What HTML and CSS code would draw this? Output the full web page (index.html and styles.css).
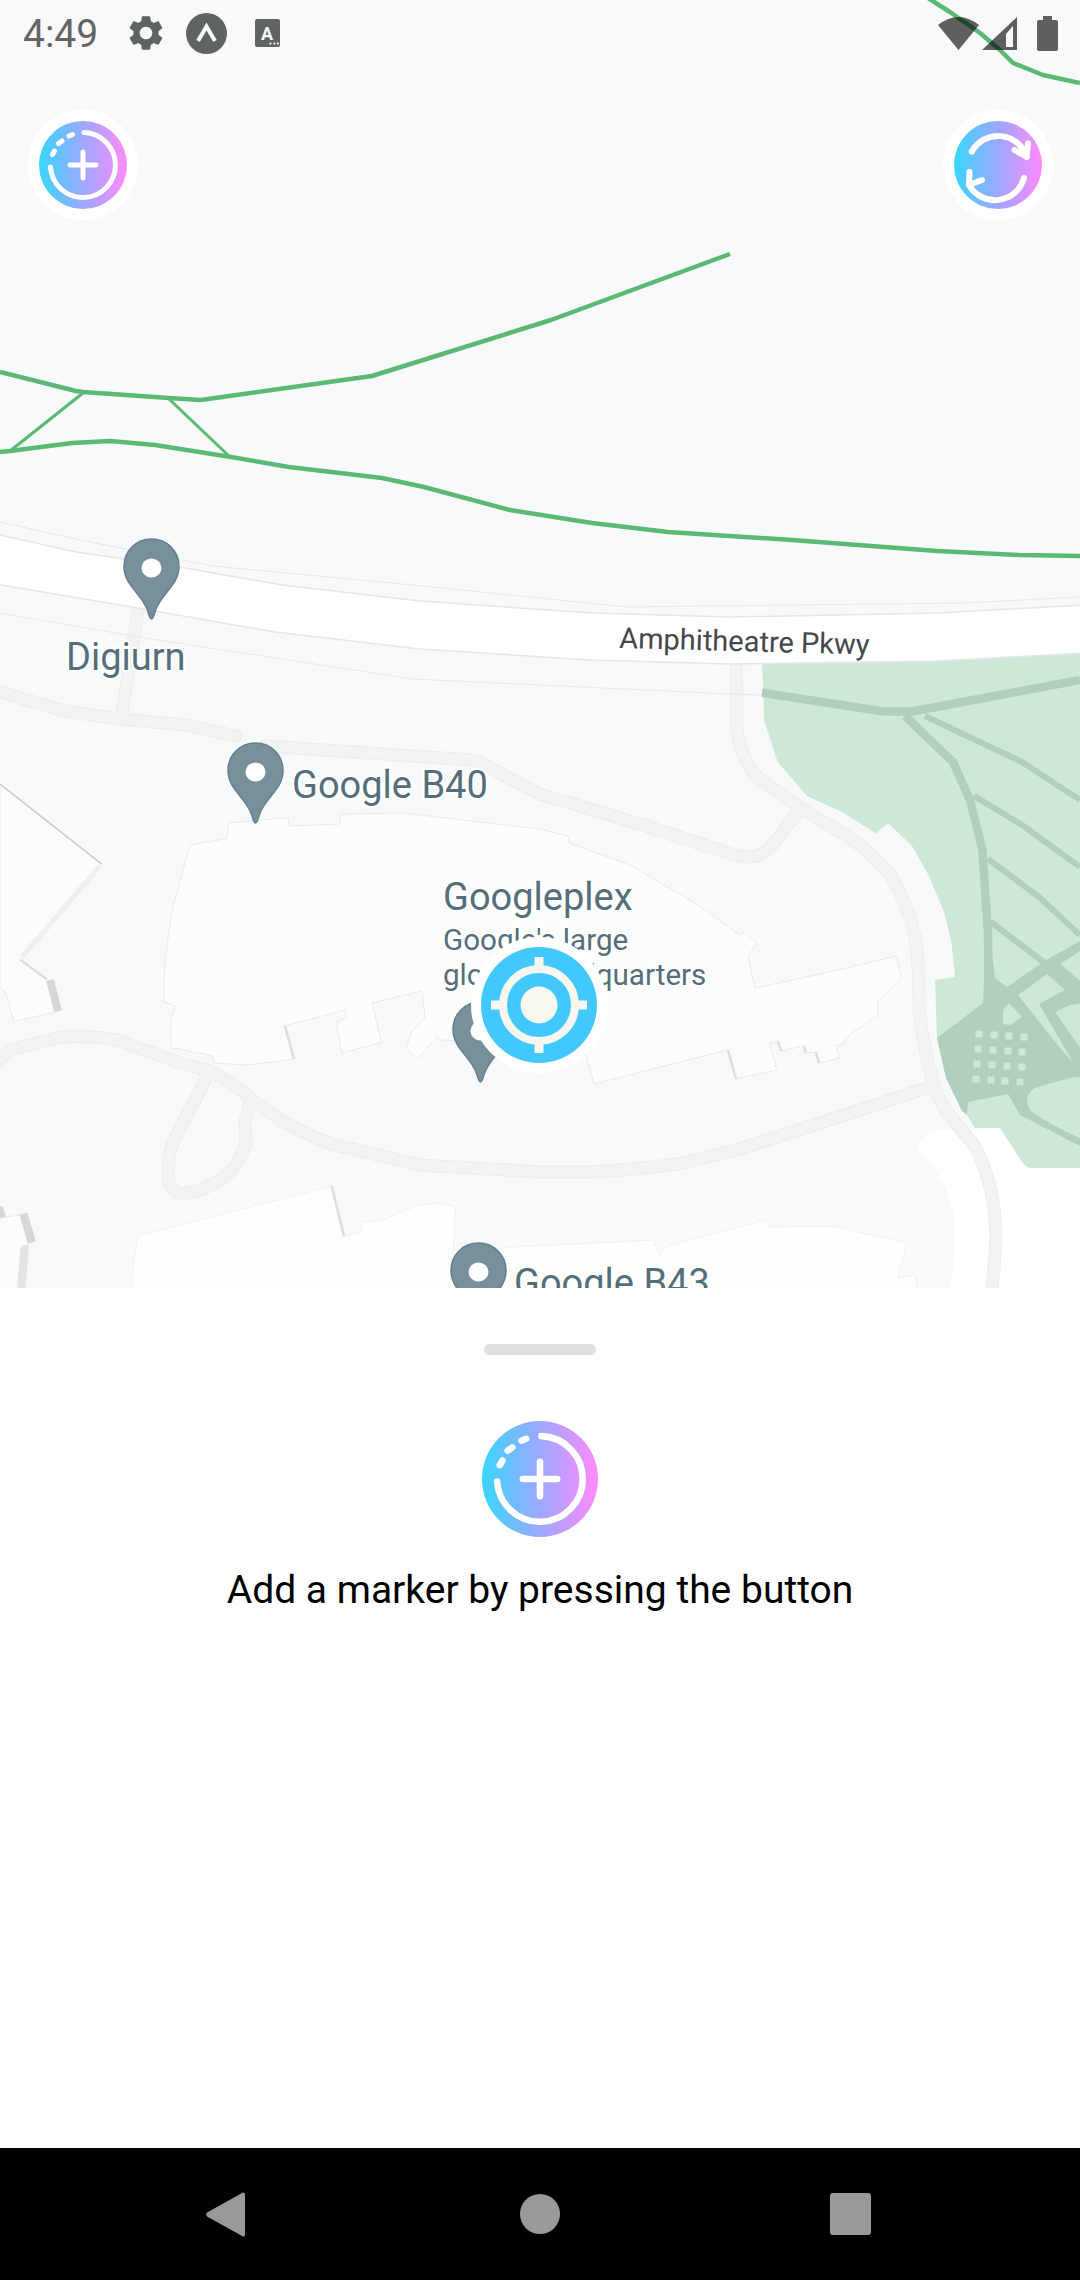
FILE: index.html
```html
<!DOCTYPE html>
<html lang="en">
<head>
<meta charset="utf-8">
<title>Add a marker</title>
<link rel="stylesheet" href="styles.css">
</head>
<body>
<div class="screen">
  <section class="map">
    <svg class="map-canvas" viewBox="0 0 1080 1288" width="1080" height="1288">
      <defs>
        <path id="pin" d="M27.5 0C12 0 0 12 0 27.5C0 46 17 54 23 70C25 75 25.500 80 27.500 80C29.500 80 30 75 32 70C38 54 55 46 55 27.500C55 12 43 0 27.500 0Z"/>
        <g id="pin-marker">
          <use href="#pin" class="pin-body"/>
          <ellipse cx="27.500" cy="29" rx="10" ry="9.500" class="pin-hole"/>
        </g>
        <path id="r-main" d="M736 650L737 728Q739 748 747 762Q752 773 760 779L798 806L850 838Q875 855 891 876Q908 905 915 935Q919 960 919 1010Q924 1050 933 1082Q938 1098 946 1111L974 1145Q985 1165 991 1191Q996 1215 996 1238Q995 1265 991 1295"/>
        <path id="r-north" d="M265 746L472 760Q482 762 492 769L540 794L643 825L719 850Q735 856 747 857Q755 857 760 855Q770 850 778 838L798 812"/>
        <path id="r-south" d="M927 1088L740 1149L678 1164Q630 1170 592 1172L540 1172L420 1165L331 1144Q305 1134 282 1121L255 1102Q245 1093 234 1085L210 1071L186 1065L117 1040Q90 1035 62 1037L10 1050L-8 1066"/>
        <path id="r-loop" d="M207 1077L176 1136Q170 1148 169 1159L168 1178Q170 1190 181 1194Q198 1192 213 1184Q228 1176 236 1165Q243 1154 246 1142L245 1121L250 1102"/>
        <path id="r-west" d="M-10 689L65 711L120 719L186 725L236 736"/>
        <path id="r-link" d="M140 600L122 712"/>
      </defs>

      <rect class="land" width="1080" height="1288"/>
      <path class="water" d="M1001 1128L946 1130Q925 1132 919 1143Q918 1150 922 1153Q945 1180 950 1200Q957 1220 955 1242Q955 1268 950 1288L1080 1288L1080 1168L1032 1168Q1026 1168 1022 1162Z"/>

      <path class="park" d="M762 655L1080 645L1080 1168L1032 1168Q1026 1168 1022 1162L1000 1128L975 1128L967 1115L946 1078L937 1038L935 980L955 977L951.500 943L944.600 913.600L929 876L912 846L888 823L876 833.600L843 812.600L807 796L777.600 762L764 720Z"/>
      <g class="trail trail-wide">
        <path d="M762 692.600L884 711.500L912 711.500L1080 680"/>
        <path d="M905 716L953 762L970 800L982.500 850L988 935L989 1006"/>
      </g>
      <g class="trail">
        <path d="M925 716L1022 762L1080 800"/>
        <path d="M974 796L1022 825L1080 867"/>
        <path d="M988 859L1039 897L1080 935"/>
        <path d="M991 922L1046 964L1080 998"/>
      </g>
      <path class="plaza" d="M937 1038L983 1003L985 960L993 960L995 978L1007 987L1046 960L1080 941L1080 1146L1020 1115L1008 1094L968 1102L967 1115L962 1111L946 1078Z"/>
      <g class="park-light">
        <path d="M1009 1003L1022 1017L1010 1025L1003 1024L1003 1010Z"/>
        <path d="M1018 995L1047 974L1065 990L1039 1004L1073 1062L1064 1053Z"/>
        <path d="M1055 1012L1070 1005L1085 1003L1085 1055Z"/>
        <path d="M1027 1098Q1029 1092 1035 1088L1073 1077L1085 1078L1085 1141L1053 1125L1033 1113Q1027 1108 1027 1098Z"/>
        <path d="M1060 964L1085 948L1085 985Z"/>
      </g>
      <g class="plaza-tiles">
        <rect x="975.500" y="1030.500" width="7" height="7"/><rect x="990.500" y="1031.500" width="7" height="7"/><rect x="1005.500" y="1032.500" width="7" height="7"/><rect x="1020.500" y="1033.500" width="7" height="7"/>
        <rect x="974.500" y="1045.500" width="7" height="7"/><rect x="989.500" y="1046.500" width="7" height="7"/><rect x="1004.500" y="1047.500" width="7" height="7"/><rect x="1018.500" y="1048.500" width="7" height="7"/>
        <rect x="973.500" y="1060.500" width="7" height="7"/><rect x="988.500" y="1061.500" width="7" height="7"/><rect x="1003.500" y="1062.500" width="7" height="7"/><rect x="1018.500" y="1063.500" width="7" height="7"/>
        <rect x="972.500" y="1075.500" width="7" height="7"/><rect x="987.500" y="1076.500" width="7" height="7"/><rect x="1001.500" y="1077.500" width="7" height="7"/><rect x="1016.500" y="1078.500" width="7" height="7"/>
      </g>

      <g class="building">
        <path d="M229 823L288 817.500L289 826L340 824L341 814L403 813L540 829L568 836L569 843L630 865L695 903L740 935L743 932.500L757 943L748 956L755 988L827.500 972.500L896 956L901.600 977.500L877 1002L878.500 1014.600L845 1038L845 1043L836 1046L840 1058L819 1063L815 1052L806 1053L803 1046L781 1051L778 1041L770 1043L776.600 1070L735.600 1079L727.700 1050L594 1084L586 1054.600L500 1040L453 1040.600L442 1040L437 1037L418 1058.600L405.600 1049L411.500 1032L425 1017.600L422 991L372 1003L381.500 1042.500L342 1053L336 1022L347 1018L345 1010L284 1026L294 1059L248 1065L213 1063L213 1056L171 1047.500L171 1019.600L175.600 1006L163.600 1001.600L165 960L172 910.500L190 845L227 838.500Z"/>
        <path d="M0 784L101.600 864L20.600 960L46.500 979L60 1011L14 1021.500L5 991L0 989Z"/>
        <path d="M-2 1218L20 1215L28 1244L21 1247L17 1295L-2 1295Z"/>
      </g>
      <path class="building building-warm" d="M131 1295L133.600 1260.600L138 1236L331.600 1186L344 1236L361 1232L361.500 1222L380 1221L418 1205L437 1203L455.600 1207L453 1255L510 1247L653.600 1240L659 1255L667 1246L765.600 1220L769 1227L832.700 1226L906.700 1243L898 1278L915 1275L919 1295Z"/>
      <g class="wall">
        <path class="wall-dark" d="M0 784L101.600 864"/>
        <path class="wall-soft" d="M99 867L22 957"/>
        <path class="wall-mid" d="M20.600 960L46.500 979"/>
        <path class="wall-thick" d="M50 980L58 1011"/>
        <path class="wall-thick" d="M23.500 1213.500L32 1242.500"/>
        <path class="wall-thick" d="M-1 1207L2 1218"/>
        <path class="wall-fat" d="M25 1245.500L21 1295"/>
        <path class="wall-mid" d="M285 1026L294 1059"/>
        <path class="wall-mid" d="M728 1050L736 1079"/>
        <path class="wall-mid" d="M331.600 1186L344 1236"/>
        <path class="wall-mid" d="M778 1041L781 1051"/>
        <path class="wall-mid" d="M804 1046L806 1053"/>
        <path class="wall-mid" d="M816 1052L819 1063"/>
      </g>

      <g class="road-edge">
        <use href="#r-main"/><use href="#r-north"/><use href="#r-south"/><use href="#r-loop"/><use href="#r-west"/><use href="#r-link"/>
      </g>
      <g class="road-fill">
        <use href="#r-main"/><use href="#r-north"/><use href="#r-south"/><use href="#r-loop"/><use href="#r-west"/><use href="#r-link"/>
      </g>

      <path class="hairline" d="M0 522L90 542L213 566L413 585L627 607L964 603L1080 597"/>
      <path class="hairline" d="M0 613L138 637L413 679L730 694L762 695"/>
      <path class="parkway" d="M-4 534L76 552L179 567L282 585L420 601L592 613L730 617L937 613L1084 605L1084 653L937 661L730 664L592 660L420 649L275 632L138 608L-4 584Z"/>

      <g class="transit">
        <path d="M0 372L76 391L83 392L169 398L201 400L372 376L551 320L730 254"/>
        <path d="M0 452L10 451L72 443L110 441L155 445L231 457L289 467L382 478L424 487L510 510L592 523L668 532L792 540L937 551L1019 555L1080 556"/>
        <path class="transit-thin" d="M83 393L10 451"/>
        <path class="transit-thin" d="M169 399L229 456"/>
        <path d="M928 -2L950 12L980 33L1000 50L1013 63L1043 75L1080 83"/>
      </g>

      <use href="#pin-marker" x="124" y="539"/>
      <use href="#pin-marker" x="228" y="743"/>
      <use href="#pin-marker" x="453" y="1002"/>
      <use href="#pin-marker" x="451" y="1243"/>

      <text class="poi" x="66" y="670">Digiurn</text>
      <text class="poi" x="292" y="798">Google B40</text>
      <text class="poi" x="443" y="910">Googleplex</text>
      <text class="poi-note" x="443" y="950">Google's large</text>
      <text class="poi-note" x="443" y="985">global headquarters</text>
      <text class="poi" x="514" y="1296">Google B43</text>
      <text class="street" x="619" y="648" transform="rotate(1.500 619 648)">Amphitheatre Pkwy</text>

      <g class="target">
        <circle class="target-halo" cx="539" cy="1005" r="68"/>
        <circle class="target-disc" cx="539" cy="1005" r="58"/>
        <circle class="target-ring" cx="539" cy="1005" r="36"/>
        <circle class="target-dot" cx="539" cy="1005" r="18.500"/>
        <path class="target-tick" d="M539 957V971M539 1039V1053M491 1005H505M573 1005H587"/>
      </g>
    </svg>

    <div class="overlay">
      <header class="status">
        <div class="status-left">
          <span class="time">4:49</span>
          <svg class="ico-gear" viewBox="0 0 24 24" width="42" height="42"><path d="M19.140 12.940c.04-.3.06-.61.06-.94 0-.32-.02-.64-.07-.94l2.030-1.580c.18-.14.23-.41.12-.61l-1.920-3.320c-.12-.22-.37-.29-.59-.22l-2.390.96c-.5-.38-1.030-.7-1.620-.94l-.36-2.540c-.04-.24-.24-.41-.48-.41h-3.840c-.24 0-.43.17-.47.41l-.36 2.540c-.59.24-1.130.57-1.620.94l-2.390-.96c-.22-.08-.47 0-.59.22L2.740 8.870c-.12.21-.08.47.12.61l2.030 1.580c-.05.3-.09.63-.09.94s.02.64.07.94l-2.030 1.580c-.18.14-.23.41-.12.61l1.920 3.320c.12.22.37.29.59.22l2.390-.96c.5.38 1.030.7 1.620.94l.36 2.540c.05.24.24.41.48.41h3.840c.24 0 .44-.17.47-.41l.36-2.540c.59-.24 1.130-.56 1.620-.94l2.390.96c.22.08.47 0 .59-.22l1.920-3.320c.12-.22.07-.47-.12-.61l-2.010-1.580zM12 15.600c-1.980 0-3.600-1.620-3.600-3.600s1.620-3.600 3.600-3.600 3.600 1.620 3.600 3.600-1.620 3.600-3.600 3.600z"/></svg>
          <svg class="ico-expo" viewBox="0 0 41 41" width="41" height="41"><circle cx="20.500" cy="20.500" r="20.500"/><path d="M12 28L20.500 13.500L29 28"/></svg>
          <svg class="ico-a" viewBox="0 0 26 28" width="26" height="28"><rect width="25" height="28" rx="2"/><text x="6" y="21">A</text><path d="M14.500 24.500h1.800M18.500 24.500h1.800M22 24.500h1.800"/></svg>
        </div>
        <div class="status-right">
          <svg class="ico-sys ico-wifi" viewBox="0 0 41 33" width="41" height="33"><path d="M0 8Q20.500 -8 41 8L20.500 33Z"/></svg>
          <svg class="ico-sys ico-signal" viewBox="0 0 35 33" width="35" height="33"><path fill-rule="evenodd" d="M0 33L35 0V33ZM24 30H31V9L24 17Z"/></svg>
          <svg class="ico-sys ico-battery" viewBox="0 0 21 35" width="21" height="35"><path d="M6 0H15V4H19Q21 4 21 6V33Q21 35 19 35H2Q0 35 0 33V6Q0 4 2 4H6Z"/></svg>
        </div>
      </header>
      <div class="fab-row">
        <button class="fab" type="button">
          <svg class="grad-icon" viewBox="0 0 88 88" width="88" height="88"><path d="M45 11.500A32.500 32.500 0 1 1 11.500 46M30 15L33.500 13.500M19.500 22.500L23 20M13.500 33.500L15.500 30M44 31V57M31 44H57"/></svg>
        </button>
        <button class="fab" type="button">
          <svg class="grad-icon grad-icon-bold" viewBox="0 0 88 88" width="88" height="88"><path d="M17.700 30.700A30 30 0 0 1 72.700 36M74 22.500L72.700 36L60.500 29M70 57A30 30 0 0 1 15 64M15.500 51L15 64L28 59"/></svg>
        </button>
      </div>
    </div>
  </section>

  <section class="sheet">
    <div class="sheet-head"><span class="handle"></span></div>
    <svg class="grad-icon grad-icon-lg" viewBox="0 0 88 88" width="116" height="116"><path d="M45 11.500A32.500 32.500 0 1 1 11.500 46M30 15L33.500 13.500M19.500 22.500L23 20M13.500 33.500L15.500 30M44 31V57M31 44H57"/></svg>
    <p class="hint">Add a marker by pressing the button</p>
  </section>

  <nav class="navbar">
    <svg class="nav-back" viewBox="0 0 39 45" width="39" height="45"><path d="M37 0.500Q39 0 39 3V42Q39 45 37 44.500L1 24.500Q-.5 22.500 1 20.500Z"/></svg>
    <span class="nav-home"></span>
    <span class="nav-recent"></span>
  </nav>
</div>
</body>
</html>
```
FILE: styles.css
```css
* { box-sizing: border-box; }
html, body { margin: 0; padding: 0; }
body { background: #fff; font-family: Roboto, "Liberation Sans", sans-serif; }

.screen { width: 1080px; height: 2280px; display: flex; flex-direction: column; overflow: hidden; }

/* map */
.map { position: relative; height: 1288px; flex: none; overflow: hidden; background: #f8f9fb; }
.map-canvas { display: block; }
.land { fill: #f8f9fb; }
.water { fill: #fff; }
.park { fill: #cee8d8; }
.plaza { fill: #b1cfbd; }
.park-light { fill: #cee8d8; }
.plaza-tiles { fill: #cee8d8; }
.trail { fill: none; stroke: #b1cfbd; stroke-width: 6; stroke-linejoin: round; }
.trail-wide { stroke-width: 8.500; }

.building { fill: #fbfcfc; stroke: #e9eaeb; stroke-width: 1; }
.building-warm { fill: #fdfdfb; stroke: #f3f0ec; }
.wall { fill: none; }
.wall-dark { stroke: #c6c8ca; stroke-width: 1.500; }
.wall-soft { stroke: #eeefef; stroke-width: 5; }
.wall-mid { stroke: #dcdddd; stroke-width: 2.500; }
.wall-thick { stroke: #d6d7d8; stroke-width: 8; }
.wall-fat { stroke: #e4e4e5; stroke-width: 8; }

.road-edge, .road-fill { fill: none; stroke-linejoin: round; stroke-linecap: round; }
.road-edge { stroke: #ebecee; stroke-width: 13; }
.road-fill { stroke: #f2f3f5; stroke-width: 11; }

.hairline { fill: none; stroke: #e8e9ec; stroke-width: 1; }
.parkway { fill: #fff; stroke: #e6e7ea; stroke-width: 1.500; }

.transit { fill: none; stroke: #5bb974; stroke-width: 4.500; stroke-linejoin: round; }
.transit-thin { stroke-width: 3; }

.pin-body { fill: #78909c; stroke: #64808f; stroke-width: 1.500; }
.pin-hole { fill: #fff; }

.poi, .poi-note, .street { font-family: Roboto, sans-serif; paint-order: stroke; stroke: #fff; stroke-linejoin: round; }
.poi { font-size: 38px; fill: #546e7a; stroke-width: 4px; }
.poi-note { font-size: 29.600px; fill: #546e7a; stroke-width: 4px; }
.street { font-size: 29px; fill: #44474b; stroke: none; }

.target-halo { fill: #fff; }
.target-disc { fill: #43c8fd; }
.target-ring { fill: none; stroke: #f7f6ef; stroke-width: 8; }
.target-dot { fill: #f7f6ef; }
.target-tick { fill: none; stroke: #f7f6ef; stroke-width: 9; }

/* overlays on the map */
.overlay { position: absolute; top: 0; left: 0; right: 0; }
.status { height: 66px; display: flex; justify-content: space-between; align-items: center; padding: 0 22px 0 23px; }
.status-left, .status-right { display: flex; align-items: center; }
.status-left { gap: 19px; }
.time { font-size: 39px; color: #636565; margin: 3px 11px 0 0; line-height: 1; width: 72px; white-space: nowrap; }
.ico-gear { fill: #5f6362; }
.ico-expo circle { fill: #5f6362; }
.ico-expo path { fill: none; stroke: #f8f9fb; stroke-width: 4; }
.ico-a { margin-left: 9px; fill: #5f6362; }
.ico-a text { font-family: Roboto, sans-serif; font-size: 18px; font-weight: 700; fill: #f8f9fb; }
.ico-a path { stroke: #f8f9fb; stroke-width: 2; }
.ico-sys { fill: rgba(0, 0, 0, .62); display: block; }
.ico-signal { margin-left: 3px; }
.ico-battery { margin-left: 20px; }

.fab-row { display: flex; justify-content: space-between; padding: 44px 27px 0 28px; }
.fab {
  width: 110px; height: 110px; border: 0; padding: 0; border-radius: 50%; background: #fff;
  display: flex; align-items: center; justify-content: center;
}
.grad-icon {
  display: block; border-radius: 50%;
  background: linear-gradient(90deg, #38d6ff 0%, #9da8ff 50%, #ff8aff 100%);
  fill: none; stroke: #fff; stroke-width: 5; stroke-linecap: round; stroke-linejoin: round;
}
.grad-icon-bold { stroke-width: 6; }

/* bottom sheet */
.sheet { flex: 1; display: flex; flex-direction: column; align-items: center; background: #fff; }
.sheet-head { width: 100%; height: 121px; padding-top: 56px; display: flex; justify-content: center; border-bottom: 1px solid #fefefe; }
.handle { width: 112px; height: 11px; border-radius: 6px; background: #e0e0e0; }
.grad-icon-lg { margin-top: 12px; }
.hint { margin: 32px 0 0; font-size: 39px; line-height: 42px; color: #000; white-space: nowrap; }

/* nav */
.navbar { height: 132px; flex: none; background: #000; display: flex; align-items: center; justify-content: space-between; padding: 0 209px 0 206px; }
.nav-back { fill: #999; }
.nav-home { width: 40px; height: 40px; margin-left: 5px; border-radius: 50%; background: #999; }
.nav-recent { width: 41px; height: 42px; border-radius: 3px; background: #999; }
```
